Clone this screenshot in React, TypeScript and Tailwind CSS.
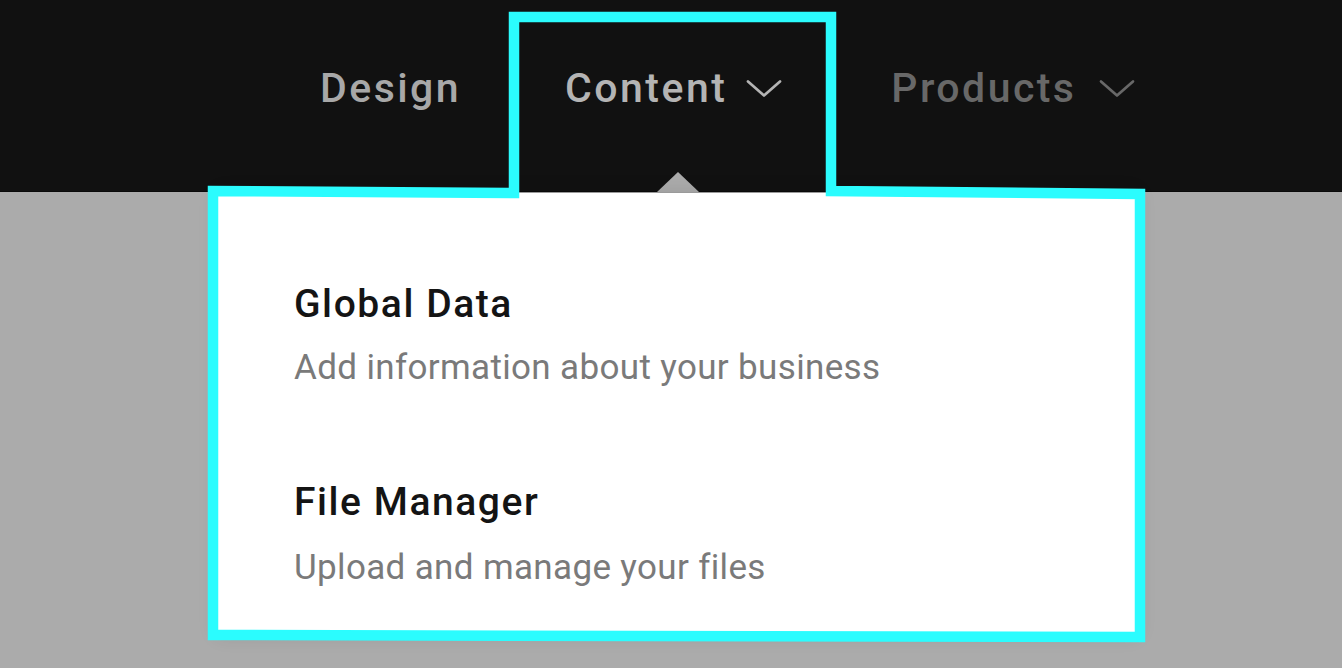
import React from "react";

function Chevron({ color }: { color: string }) {
  return (
    <svg width="36" height="19" viewBox="0 0 36 19" fill="none" className="mt-[15px]">
      <path d="M2 2.5 L18 16.5 L34 2.5" stroke={color} strokeWidth="2.7" strokeLinecap="round" strokeLinejoin="round" />
    </svg>
  );
}

export default function App() {
  const font = { fontFamily: "Roboto, 'Noto Sans', sans-serif" };
  return (
    <div className="relative w-[1342px] h-[668px] overflow-hidden bg-[#ababab]" style={font}>
      <header className="h-[192px] bg-[#111111] border-b border-[#0a0a0a] flex items-start pt-[64px] pl-[320px]">
        <div className="text-[41px] leading-[48px] font-medium tracking-[0.06em] text-[#a8a8a8]">Design</div>
        <div className="ml-[104px] flex items-start gap-[19px]">
          <span className="text-[41px] leading-[48px] font-medium tracking-[0.06em] text-[#b4b4b4]">Content</span>
          <Chevron color="#b4b4b4" />
        </div>
        <div className="ml-[109px] flex items-start gap-[23px]">
          <span className="text-[41px] leading-[48px] font-medium tracking-[0.06em] text-[#686868]">Products</span>
          <Chevron color="#686868" />
        </div>
      </header>

      {/* caret */}
      <div className="absolute left-[657px] top-[172px] w-0 h-0 border-l-[21px] border-r-[21px] border-b-[20px] border-l-transparent border-r-transparent border-b-[#ababab]" />

      {/* dropdown panel */}
      <div className="absolute left-[216px] top-[192px] w-[922px] h-[444px] bg-white border-t border-[#9a9a9a] shadow-[0_0_18px_rgba(0,0,0,0.10)] pt-[89px] pl-[78px]">
        <div className="flex flex-col">
          <div className="text-[39px] leading-[44px] font-medium tracking-[0.04em] text-[#141414]">Global Data</div>
          <div className="mt-[21px] text-[35px] leading-[41px] tracking-[0.01em] text-[#7a7a7a]">Add information about your business</div>
        </div>
        <div className="flex flex-col mt-[92px]">
          <div className="text-[39px] leading-[44px] font-medium tracking-[0.04em] text-[#141414]">File Manager</div>
          <div className="mt-[23px] text-[35px] leading-[41px] tracking-[0.01em] text-[#7a7a7a]">Upload and manage your files</div>
        </div>
      </div>

      {/* highlight outline */}
      <svg className="absolute left-0 top-0 pointer-events-none" width="1342" height="668" viewBox="0 0 1342 668">
        <polygon
          points="514,17 831,17 831,191 1140,194 1140,637 213,635 213,191 514,193"
          fill="none"
          stroke="#2bfcfe"
          strokeWidth="10.5"
          strokeLinejoin="miter"
        />
      </svg>
    </div>
  );
}
